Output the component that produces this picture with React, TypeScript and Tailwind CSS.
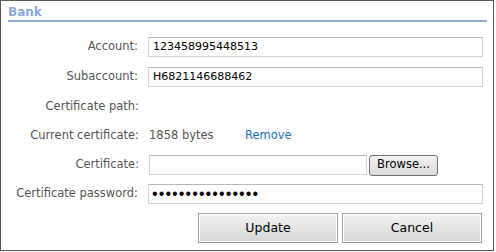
import React from "react";

const font = { fontFamily: '"DejaVu Sans", Tahoma, sans-serif' };

function Row({ label, children, className = "" }: { label: string; children?: React.ReactNode; className?: string }) {
  return (
    <div className={"flex items-center h-[20px] " + className}>
      <div className="w-[138px] text-right text-[11.5px] text-[#555555] whitespace-nowrap">{label}</div>
      <div className="ml-[10px] flex items-center flex-1">{children}</div>
    </div>
  );
}

function Field({ value, w }: { value?: string; w: string }) {
  return (
    <div className={"h-[20px] border border-[#d4d4d4] border-t-[#b9b9b9] bg-white pl-[4px] flex items-center text-[11px] text-black whitespace-nowrap overflow-hidden " + w}>
      {value}
    </div>
  );
}

export default function App() {
  return (
    <div style={font} className="w-[494px] h-[251px] border border-[#595959] bg-white">
      <div className="pl-[7px] pt-[3px] h-[18px] text-[12px] font-bold text-[#8aa7da] leading-[16px]">Bank</div>
      <div className="ml-[7px] w-[479px] h-[2px] bg-[#8eaadc] mt-[1px]" />
      <div className="mt-[15px] pr-[10px]">
        <Row label="Account:">
          <Field value="123458995448513" w="w-[335px]" />
        </Row>
        <Row label="Subaccount:" className="mt-[10px]">
          <Field value="H6821146688462" w="w-[335px]" />
        </Row>
        <Row label="Certificate path:" className="mt-[10px]" />
        <Row label="Current certificate:" className="mt-[9px]">
          <span className="w-[96px] text-[11.5px] text-[#555555]">1858 bytes</span>
          <span className="text-[11.5px] text-[#1d6fc0]">Remove</span>
        </Row>
        <Row label="Certificate:" className="mt-[9px]">
          <Field w="w-[218px]" />
          <div className="ml-[2px] w-[69px] h-[21px] rounded-[3px] border border-[#707070] bg-gradient-to-b from-[#f2f2f2] to-[#d9d9d9] flex items-center justify-center text-[11.5px] text-black">
            Browse...
          </div>
        </Row>
        <Row label="Certificate password:" className="mt-[9px]">
          <div className="w-[335px] h-[20px] border border-[#d4d4d4] border-t-[#b9b9b9] bg-white pl-[3px] flex items-center text-[16px] tracking-[1.1px] text-black leading-none" style={{ fontFamily: '"Liberation Sans", Arial, sans-serif' }}>
            ••••••••••••••••
          </div>
        </Row>
        <div className="mt-[9px] flex justify-end gap-[4px] pr-[1px]">
          <div className="w-[140px] h-[30px] border border-[#a0a0a0] shadow-[inset_0_0_0_1px_#ffffff] bg-gradient-to-b from-[#f3f3f3] to-[#d6d6d6] flex items-center justify-center text-[12.5px] text-black">
            Update
          </div>
          <div className="w-[140px] h-[30px] border border-[#a0a0a0] shadow-[inset_0_0_0_1px_#ffffff] bg-gradient-to-b from-[#f3f3f3] to-[#d6d6d6] flex items-center justify-center text-[12.5px] text-black">
            Cancel
          </div>
        </div>
      </div>
    </div>
  );
}
